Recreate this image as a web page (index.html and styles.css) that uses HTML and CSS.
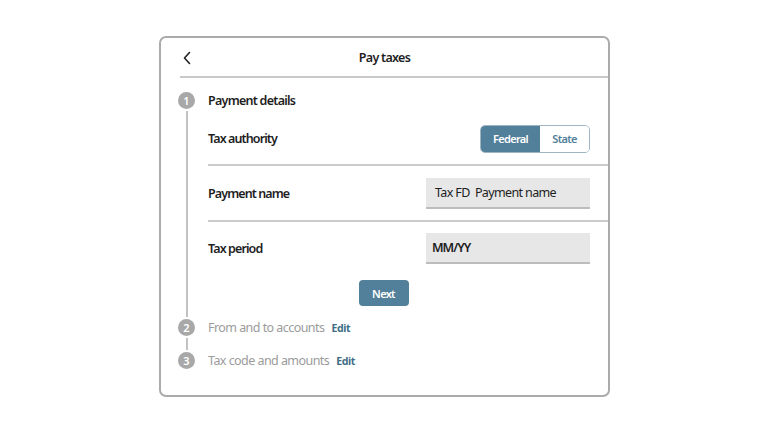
FILE: index.html
```html
<!DOCTYPE html>
<html>
<head>
<meta charset="utf-8">
<link rel="stylesheet" href="styles.css">
</head>
<body>
<div class="card">
  <div class="header">
    <span class="back"><svg width="10" height="14" viewBox="0 0 10 14"><path d="M7.5 1.5 L2.5 7 L7.5 12.5" fill="none" stroke="#222" stroke-width="1.6" stroke-linecap="round" stroke-linejoin="round"/></svg></span>
    <span class="title">Pay taxes</span>
    <span></span>
  </div>
  <div class="steps">
    <div class="step">
      <div class="rail"><span class="num">1</span><span class="line long"></span></div>
      <div class="body">
        <div class="step-title">Payment details</div>
        <div class="row r1">
          <span class="label">Tax authority</span>
          <div class="seg"><span class="seg-on">Federal</span><span class="seg-off">State</span></div>
        </div>
        <div class="row r2">
          <span class="label">Payment name</span>
          <div class="input">Tax FD&nbsp; Payment name</div>
        </div>
        <div class="row r3">
          <span class="label">Tax period</span>
          <div class="input strong">MM/YY</div>
        </div>
        <div class="actions"><button class="next">Next</button></div>
      </div>
    </div>
    <div class="step">
      <div class="rail"><span class="num">2</span><span class="line short"></span></div>
      <div class="body"><div class="step-title muted">From and to accounts <a class="edit">Edit</a></div></div>
    </div>
    <div class="step">
      <div class="rail"><span class="num">3</span></div>
      <div class="body"><div class="step-title muted">Tax code and amounts <a class="edit">Edit</a></div></div>
    </div>
  </div>
</div>
</body>
</html>
```
FILE: styles.css
```css
* { box-sizing: border-box; }
body {
  margin: 0;
  background: #fff;
  font-family: "Noto Sans", "Open Sans", sans-serif;
  color: #1e1e1e;
}
.card {
  margin: 36px 0 0 159px;
  width: 451px;
  height: 361px;
  border: 2px solid #ababab;
  border-radius: 7px;
}
.header {
  margin-left: 19px;
  padding-right: 19px;
  height: 40px;
  border-bottom: 2px solid #c9c9c9;
  display: grid;
  grid-template-columns: 1fr auto 1fr;
  align-items: center;
}
.back { display: flex; align-items: center; padding-left: 2px; padding-top: 1px; }
.title { font-size: 12.5px; font-weight: 600; letter-spacing: -0.7px; }
.steps { margin-left: 17px; padding-top: 14px; }
.step { display: flex; }
.rail {
  width: 17px;
  display: flex;
  flex-direction: column;
  align-items: center;
  margin-right: 13px;
}
.num {
  width: 17px; height: 17px;
  border-radius: 50%;
  background: #a8a8a8;
  color: #fff;
  font-size: 11px;
  font-weight: 600;
  display: flex; align-items: center; justify-content: center;
  flex: none;
}
.line { width: 2px; background: #c2c2c2; }
.line.long { flex: 1; margin: 2px 0 2px; }
.line.short { height: 12px; margin: 2px 0 2px; }
.body { flex: 1; }
.step-title {
  height: 17px;
  display: flex; align-items: center;
  font-size: 12.5px; font-weight: 600; letter-spacing: -0.73px;
}
.step-title.muted { color: #9b9b9b; font-weight: 400; letter-spacing: -0.55px; }
.edit { color: #3d6d86; font-size: 10.5px; font-weight: 700; margin-left: 7px; letter-spacing: -0.35px; }
.row {
  display: flex; align-items: center; justify-content: space-between;
  padding-right: 18px;
  border-bottom: 2px solid #cbcbcb;
}
.row.r1 { margin-top: 4px; height: 53px; }
.row.r2 { height: 56px; }
.row.r3 { height: 52px; border-bottom: none; }
.label { font-size: 12.5px; font-weight: 600; letter-spacing: -0.9px; }
.seg {
  display: flex; height: 28px;
  border: 1px solid #9fb5c2; border-radius: 5px; overflow: hidden;
  font-size: 11px; font-weight: 600; letter-spacing: -0.7px;
}
.seg-on { width: 59px; background: #52809a; color: #fff; display: flex; align-items: center; justify-content: center; }
.seg-off { width: 49px; background: #fff; color: #52809a; display: flex; align-items: center; justify-content: center; }
.input {
  width: 164px; height: 31px;
  background: #e7e7e7;
  border-bottom: 2px solid #bdbdbd;
  display: flex; align-items: center;
  padding-left: 9px;
  font-size: 12.5px; letter-spacing: -0.63px;
}
.input.strong { padding-left: 6px; font-weight: 600; letter-spacing: -1px; }
.actions { display: flex; justify-content: center; padding-right: 49px; margin-top: 6px; margin-bottom: 13px; }
.next {
  width: 50px; height: 26px;
  border: none; border-radius: 4px;
  background: #52809a; color: #fff;
  font-family: inherit; font-size: 11px; font-weight: 600; letter-spacing: -0.7px;
}
```
